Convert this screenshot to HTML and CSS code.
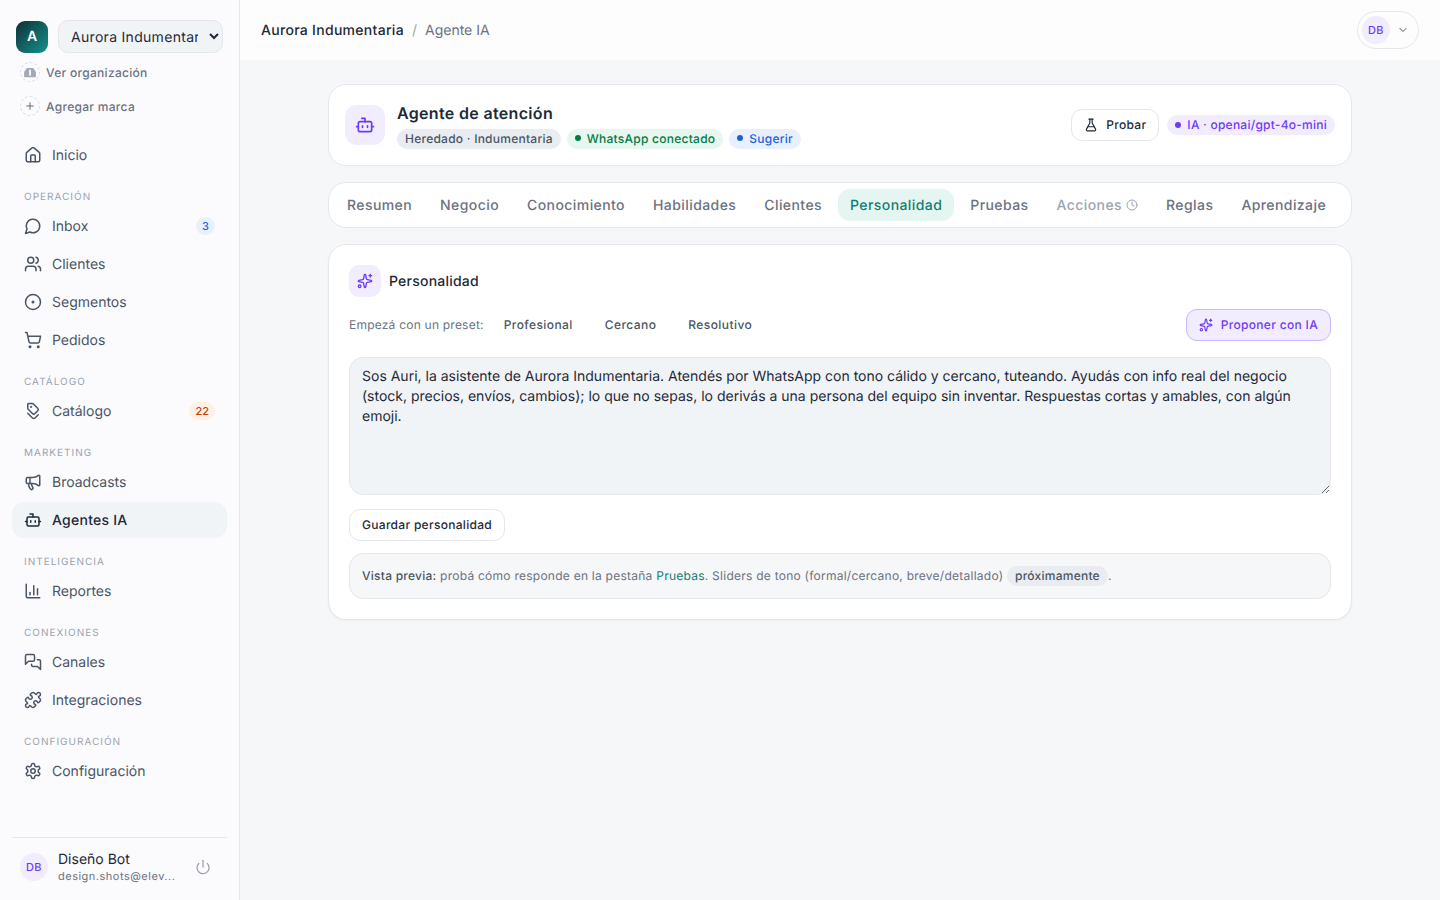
FILE: index.html
```html
<!DOCTYPE html>
<html lang="es">
<head>
    <meta charset="UTF-8">
    <meta name="viewport" content="width=device-width, initial-scale=1.0">
    <title>Agente IA</title>
    <link rel="stylesheet" href="styles.css">
</head>
<body>
    <div class="app">
        <aside class="sidebar">
            <div class="brandRow">
                <div class="brandLogo">A</div>
                <select class="brandSelect">
                    <option>Aurora Indumentaria</option>
                </select>
            </div>
            <a class="brandLink">
                <span class="brandLinkIcon">
                    <svg class="ico14 orgIcon" viewBox="0 0 24 24"><path d="M3 20v-8l4-6h10l4 6v8z"/><path class="orgDoor" d="M12 9v8"/></svg>
                </span>
                Ver organización
            </a>
            <a class="brandLink">
                <span class="brandLinkIcon">
                    <svg class="ico10 dark" viewBox="0 0 24 24"><path d="M4 12h16"/><path d="M12 4v16"/></svg>
                </span>
                Agregar marca
            </a>

            <nav class="nav">
                <a class="navItem">
                    <svg class="ico18" viewBox="0 0 24 24"><path d="M15 21v-8a1 1 0 0 0-1-1h-4a1 1 0 0 0-1 1v8"/><path d="M3 10a2 2 0 0 1 .709-1.528l7-5.999a2 2 0 0 1 2.582 0l7 5.999A2 2 0 0 1 21 10v9a2 2 0 0 1-2 2H5a2 2 0 0 1-2-2z"/></svg>
                    Inicio
                </a>

                <div class="navLabel">OPERACIÓN</div>
                <a class="navItem">
                    <svg class="ico18" viewBox="0 0 24 24"><path d="M7.9 20A9 9 0 1 0 4 16.1L2 22Z"/></svg>
                    Inbox
                    <span class="navBadge blue">3</span>
                </a>
                <a class="navItem">
                    <svg class="ico18" viewBox="0 0 24 24"><path d="M16 21v-2a4 4 0 0 0-4-4H6a4 4 0 0 0-4 4v2"/><circle cx="9" cy="7" r="4"/><path d="M22 21v-2a4 4 0 0 0-3-3.87"/><path d="M16 3.13a4 4 0 0 1 0 7.75"/></svg>
                    Clientes
                </a>
                <a class="navItem">
                    <svg class="ico18" viewBox="0 0 24 24"><circle cx="12" cy="12" r="10"/><circle cx="12" cy="12" r="1"/></svg>
                    Segmentos
                </a>
                <a class="navItem">
                    <svg class="ico18" viewBox="0 0 24 24"><circle cx="8" cy="21" r="1"/><circle cx="19" cy="21" r="1"/><path d="M2.05 2.05h2l2.66 12.42a2 2 0 0 0 2 1.58h9.78a2 2 0 0 0 1.95-1.57l1.65-7.43H5.12"/></svg>
                    Pedidos
                </a>

                <div class="navLabel">CATÁLOGO</div>
                <a class="navItem">
                    <svg class="ico18" viewBox="0 0 24 24"><g transform="matrix(0 1 1 0 0 0)"><path d="m15 5 6.3 6.3a2.4 2.4 0 0 1 0 3.4L17 19"/><path d="M9.586 5.586A2 2 0 0 0 8.172 5H3a1 1 0 0 0-1 1v5.172a2 2 0 0 0 .586 1.414L8.29 18.29a2.426 2.426 0 0 0 3.42 0l3.58-3.58a2.426 2.426 0 0 0 0-3.42z"/><circle cx="6.5" cy="9.5" r=".5" fill="currentColor"/></g></svg>
                    Catálogo
                    <span class="navBadge orange">22</span>
                </a>

                <div class="navLabel">MARKETING</div>
                <a class="navItem">
                    <svg class="ico18" viewBox="0 0 24 24"><path d="M11 6a13 13 0 0 0 8.4-2.8A1 1 0 0 1 21 4v12a1 1 0 0 1-1.6.8A13 13 0 0 0 11 14H5a2 2 0 0 1-2-2V8a2 2 0 0 1 2-2z"/><path d="M6 14a12 12 0 0 0 2.4 7.2 2 2 0 0 0 3.2-2.4A8 8 0 0 1 10 14"/><path d="M8 6v8"/></svg>
                    Broadcasts
                </a>
                <a class="navItem active">
                    <svg class="ico18" viewBox="0 0 24 24"><path d="M12 8V4H8"/><rect width="16" height="12" x="4" y="8" rx="2"/><path d="M2 14h2"/><path d="M20 14h2"/><path d="M15 13v2"/><path d="M9 13v2"/></svg>
                    Agentes IA
                </a>

                <div class="navLabel">INTELIGENCIA</div>
                <a class="navItem">
                    <svg class="ico18" viewBox="0 0 24 24"><path d="M3 3v16a2 2 0 0 0 2 2h16"/><path d="M18 17V9"/><path d="M13 17V5"/><path d="M8 17v-3"/></svg>
                    Reportes
                </a>

                <div class="navLabel">CONEXIONES</div>
                <a class="navItem">
                    <svg class="ico18" viewBox="0 0 24 24"><path d="M14 9a2 2 0 0 1-2 2H6l-4 4V4a2 2 0 0 1 2-2h8a2 2 0 0 1 2 2z"/><path d="M18 9h2a2 2 0 0 1 2 2v11l-4-4h-6a2 2 0 0 1-2-2v-1"/></svg>
                    Canales
                </a>
                <a class="navItem">
                    <svg class="ico18" viewBox="0 0 24 24"><path d="M15.39 4.39a1 1 0 0 0 1.68-.474 2.5 2.5 0 1 1 3.014 3.015 1 1 0 0 0-.474 1.68l1.683 1.682a2.414 2.414 0 0 1 0 3.414L19.61 15.39a1 1 0 0 1-1.68-.474 2.5 2.5 0 1 0-3.014 3.015 1 1 0 0 1 .474 1.68l-1.683 1.682a2.414 2.414 0 0 1-3.414 0L8.61 19.61a1 1 0 0 0-1.68.474 2.5 2.5 0 1 1-3.014-3.015 1 1 0 0 0 .474-1.68l-1.683-1.682a2.414 2.414 0 0 1 0-3.414L4.39 8.61a1 1 0 0 1 1.68.474 2.5 2.5 0 1 0 3.014-3.015 1 1 0 0 1-.474-1.68l1.683-1.682a2.414 2.414 0 0 1 3.414 0z"/></svg>
                    Integraciones
                </a>

                <div class="navLabel">CONFIGURACIÓN</div>
                <a class="navItem">
                    <svg class="ico18" viewBox="0 0 24 24"><path d="M12.22 2h-.44a2 2 0 0 0-2 2v.18a2 2 0 0 1-1 1.73l-.43.25a2 2 0 0 1-2 0l-.15-.08a2 2 0 0 0-2.73.73l-.22.38a2 2 0 0 0 .73 2.73l.15.1a2 2 0 0 1 1 1.72v.51a2 2 0 0 1-1 1.74l-.15.09a2 2 0 0 0-.73 2.73l.22.38a2 2 0 0 0 2.73.73l.15-.08a2 2 0 0 1 2 0l.43.25a2 2 0 0 1 1 1.73V20a2 2 0 0 0 2 2h.44a2 2 0 0 0 2-2v-.18a2 2 0 0 1 1-1.73l.43-.25a2 2 0 0 1 2 0l.15.08a2 2 0 0 0 2.73-.73l.22-.39a2 2 0 0 0-.73-2.73l-.15-.08a2 2 0 0 1-1-1.74v-.5a2 2 0 0 1 1-1.74l.15-.09a2 2 0 0 0 .73-2.73l-.22-.38a2 2 0 0 0-2.73-.73l-.15.08a2 2 0 0 1-2 0l-.43-.25a2 2 0 0 1-1-1.73V4a2 2 0 0 0-2-2z"/><circle cx="12" cy="12" r="3"/></svg>
                    Configuración
                </a>
            </nav>

            <div class="userRow">
                <div class="avatar">DB</div>
                <div class="userInfo">
                    <div class="userName">Diseño Bot</div>
                    <div class="userMail">design.shots@elev...</div>
                </div>
                <svg class="ico16 muted" viewBox="0 0 24 24"><path d="M12 2v10"/><path d="M18.4 6.6a9 9 0 1 1-12.77.04"/></svg>
            </div>
        </aside>

        <div class="main">
            <header class="topbar">
                <div class="crumbs">
                    <span class="crumbStrong">Aurora Indumentaria</span>
                    <span class="crumbSep">/</span>
                    <span>Agente IA</span>
                </div>
                <div class="userMenu">
                    <div class="avatar">DB</div>
                    <svg class="ico12" viewBox="0 0 24 24"><path d="m6 9 6 6 6-6"/></svg>
                </div>
            </header>

            <div class="content">
                <section class="agentCard">
                    <div class="agentIcon">
                        <svg class="ico20 violet" viewBox="0 0 24 24"><path d="M12 8V4H8"/><rect width="16" height="12" x="4" y="8" rx="2"/><path d="M2 14h2"/><path d="M20 14h2"/><path d="M15 13v2"/><path d="M9 13v2"/></svg>
                    </div>
                    <div class="agentInfo">
                        <h1 class="agentName">Agente de atención</h1>
                        <div class="pills">
                            <span class="pill gray">Heredado · Indumentaria</span>
                            <span class="pill green"><i class="dot"></i>WhatsApp conectado</span>
                            <span class="pill blue"><i class="dot"></i>Sugerir</span>
                        </div>
                    </div>
                    <div class="agentActions">
                        <button class="btn">
                            <svg class="ico14" viewBox="0 0 24 24"><path d="M14 2v6a2 2 0 0 0 .245.96l5.51 10.08A2 2 0 0 1 18 22H6a2 2 0 0 1-1.755-2.96l5.51-10.08A2 2 0 0 0 10 8V2"/><path d="M6.453 15h11.094"/><path d="M8.5 2h7"/></svg>
                            Probar
                        </button>
                        <span class="pill violetPill"><i class="dot"></i>IA · openai/gpt-4o-mini</span>
                    </div>
                </section>

                <nav class="tabs">
                    <a class="tab">Resumen</a>
                    <a class="tab">Negocio</a>
                    <a class="tab">Conocimiento</a>
                    <a class="tab">Habilidades</a>
                    <a class="tab">Clientes</a>
                    <a class="tab active">Personalidad</a>
                    <a class="tab">Pruebas</a>
                    <a class="tab disabled">Acciones
                        <svg class="ico12" viewBox="0 0 24 24"><circle cx="12" cy="12" r="10"/><path d="M12 6v6l4 2"/></svg>
                    </a>
                    <a class="tab">Reglas</a>
                    <a class="tab">Aprendizaje</a>
                </nav>

                <section class="panel">
                    <div class="panelHead">
                        <div class="panelIcon">
                            <svg class="ico16 violet" viewBox="0 0 24 24"><path d="M11.017 2.814a1 1 0 0 1 1.966 0l1.051 5.558a2 2 0 0 0 1.594 1.594l5.558 1.051a1 1 0 0 1 0 1.966l-5.558 1.051a2 2 0 0 0-1.594 1.594l-1.051 5.558a1 1 0 0 1-1.966 0l-1.051-5.558a2 2 0 0 0-1.594-1.594l-5.558-1.051a1 1 0 0 1 0-1.966l5.558-1.051a2 2 0 0 0 1.594-1.594z"/><path d="M20 2v4"/><path d="M22 4h-4"/><circle cx="4" cy="20" r="2"/></svg>
                        </div>
                        <h2 class="panelTitle">Personalidad</h2>
                    </div>

                    <div class="presetRow">
                        <span class="presetLabel">Empezá con un preset:</span>
                        <button class="preset">Profesional</button>
                        <button class="preset">Cercano</button>
                        <button class="preset">Resolutivo</button>
                        <button class="proposeBtn">
                            <svg class="ico14" viewBox="0 0 24 24"><path d="M11.017 2.814a1 1 0 0 1 1.966 0l1.051 5.558a2 2 0 0 0 1.594 1.594l5.558 1.051a1 1 0 0 1 0 1.966l-5.558 1.051a2 2 0 0 0-1.594 1.594l-1.051 5.558a1 1 0 0 1-1.966 0l-1.051-5.558a2 2 0 0 0-1.594-1.594l-5.558-1.051a1 1 0 0 1 0-1.966l5.558-1.051a2 2 0 0 0 1.594-1.594z"/><path d="M20 2v4"/><path d="M22 4h-4"/><circle cx="4" cy="20" r="2"/></svg>
                            Proponer con IA
                        </button>
                    </div>

                    <textarea class="promptBox">Sos Auri, la asistente de Aurora Indumentaria. Atendés por WhatsApp con tono cálido y cercano, tuteando. Ayudás con info real del negocio (stock, precios, envíos, cambios); lo que no sepas, lo derivás a una persona del equipo sin inventar. Respuestas cortas y amables, con algún emoji.</textarea>

                    <div class="saveRow">
                        <button class="btn">Guardar personalidad</button>
                    </div>

                    <div class="previewNote">
                        <strong>Vista previa:</strong> probá cómo responde en la pestaña <a class="noteLink">Pruebas</a>. Sliders de tono (formal/cercano, breve/detallado) <span class="soonPill">próximamente</span>.
                    </div>
                </section>
            </div>
        </div>
    </div>
</body>
</html>
```

FILE: styles.css
```css
*{
    box-sizing: border-box;
}
html, body{
    margin: 0;
    height: 100%;
}
body{
    font-family: Inter, "Liberation Sans", sans-serif;
    text-rendering: geometricPrecision;
    color: #1f2937;
    background-color: #f6f7f9;
    overflow: hidden;
}
button, select{
    text-rendering: inherit;
}
svg{
    fill: none;
    stroke: currentColor;
    stroke-width: 2;
    stroke-linecap: round;
    stroke-linejoin: round;
    flex-shrink: 0;
}
.ico10{ width: 10px; height: 10px; }
.ico12{ width: 12px; height: 12px; }
.ico14{ width: 14px; height: 14px; }
.ico16{ width: 16px; height: 16px; }
.ico18{ width: 18px; height: 18px; }
.ico20{ width: 20px; height: 20px; }
.violet{ color: #6d3bf5; }
.muted{ color: #9ca3af; }
.dark{ color: #4b5563; }
.orgIcon{
    color: #a3a9b5;
    fill: #a3a9b5;
}
.orgDoor{
    stroke: #fbfbfe;
    stroke-width: 3;
}

.app{
    display: flex;
    height: 900px;
}

/* sidebar */
.sidebar{
    width: 240px;
    flex-shrink: 0;
    display: flex;
    flex-direction: column;
    padding: 20px 12px 0;
    background-color: #fbfbfe;
    border-right: 1px solid #e5e7eb;
}
.brandRow{
    display: flex;
    align-items: center;
    gap: 10px;
    padding-left: 4px;
    height: 33px;
}
.brandLogo{
    width: 32px;
    height: 32px;
    display: flex;
    align-items: center;
    justify-content: center;
    border-radius: 9px;
    background: linear-gradient(135deg, #0f2f36, #14948a);
    color: #fff;
    font-size: 14px;
    font-weight: 600;
}
.brandSelect{
    width: 165px;
    height: 33px;
    padding: 1px 8px 0;
    border: 1px solid #e5e7eb;
    border-radius: 10px;
    background-color: #f1f4f7;
    color: #1f2937;
    font-family: inherit;
    font-size: 14px;
    letter-spacing: 0.3px;
}
.brandLink{
    display: flex;
    align-items: center;
    gap: 6px;
    height: 34px;
    padding-left: 8px;
    font-size: 12px;
    font-weight: 500;
    letter-spacing: 0.3px;
    color: #6b7280;
}
.brandRow + .brandLink{
    margin-top: 2px;
}
.brandLinkIcon{
    width: 20px;
    height: 20px;
    display: flex;
    align-items: center;
    justify-content: center;
    border: 1px dashed #d8dbe1;
    border-radius: 50%;
}
.nav{
    display: flex;
    flex-direction: column;
    margin-top: 14px;
}
.navItem{
    display: flex;
    align-items: center;
    gap: 10px;
    height: 36px;
    margin-bottom: 2px;
    padding: 0 12px;
    border-radius: 12px;
    font-size: 14px;
    color: #4b5563;
}
.navItem.active{
    background-color: #f1f4f7;
    color: #1f2937;
    font-weight: 500;
    letter-spacing: 0.25px;
}
.navLabel{
    margin: 14px 0 0;
    padding: 0 12px;
    height: 19px;
    font-size: 10px;
    font-weight: 400;
    letter-spacing: 1px;
    line-height: 17px;
    color: #9ca3af;
}
.navBadge{
    margin-left: auto;
    height: 18px;
    min-width: 19px;
    padding: 0 6px;
    display: flex;
    align-items: center;
    justify-content: center;
    border-radius: 9px;
    font-size: 11px;
    font-weight: 500;
}
.navBadge.blue{
    background-color: #e9f0fd;
    color: #1d5fdb;
}
.navBadge.orange{
    background-color: #fdf0e5;
    color: #c2410c;
}
.userRow{
    margin-top: auto;
    height: 63px;
    display: flex;
    align-items: center;
    padding: 0 16px 5px 8px;
    border-top: 1px solid #e5e7eb;
}
.avatar{
    width: 28px;
    height: 28px;
    display: flex;
    align-items: center;
    justify-content: center;
    border-radius: 50%;
    background-color: #f1ecfe;
    color: #6d3bf5;
    font-size: 11px;
    font-weight: 500;
    letter-spacing: 0.3px;
    flex-shrink: 0;
}
.userInfo{
    margin-left: 10px;
    flex-grow: 1;
    min-width: 0;
}
.userName{
    font-size: 14px;
    line-height: 18px;
    color: #1f2937;
}
.userMail{
    font-size: 11px;
    line-height: 14px;
    letter-spacing: 0.5px;
    color: #6b7280;
    white-space: nowrap;
}

/* main area */
.main{
    flex-grow: 1;
    min-width: 0;
}
.topbar{
    height: 60px;
    display: flex;
    align-items: center;
    justify-content: space-between;
    padding: 0 21px;
    background-color: #fdfdfe;
}
.crumbs{
    display: flex;
    align-items: center;
    gap: 8px;
    font-size: 14px;
    color: #6b7280;
}
.crumbStrong{
    color: #1f2937;
    font-weight: 500;
    letter-spacing: 0.3px;
}
.crumbSep{
    color: #9ca3af;
}
.userMenu{
    width: 62px;
    height: 38px;
    display: flex;
    align-items: center;
    gap: 7px;
    padding: 0 4px;
    border: 1px solid #e5e7eb;
    border-radius: 19px;
    color: #4b5563;
}
.content{
    width: 1024px;
    margin: 0 auto;
    padding-top: 24px;
    display: flex;
    flex-direction: column;
    gap: 16px;
}

.agentCard{
    height: 82px;
    display: flex;
    align-items: center;
    padding: 0 16px;
    background-color: #fff;
    border: 1px solid #e5e7eb;
    border-radius: 18px;
}
.agentIcon{
    width: 40px;
    height: 40px;
    display: flex;
    align-items: center;
    justify-content: center;
    border-radius: 12px;
    background-color: #f1ecfe;
}
.agentInfo{
    margin-left: 12px;
}
.agentName{
    margin: 0 0 5px;
    font-size: 16px;
    line-height: 22px;
    font-weight: 600;
    letter-spacing: 0.33px;
    color: #1f2937;
}
.pills{
    display: flex;
    gap: 6px;
}
.pill{
    display: inline-flex;
    align-items: center;
    gap: 6px;
    height: 20px;
    padding: 0 8px 1px;
    border-radius: 10px;
    font-size: 12px;
    font-weight: 500;
    letter-spacing: 0.25px;
    white-space: nowrap;
}
.dot{
    width: 6px;
    height: 6px;
    border-radius: 50%;
    background-color: currentColor;
}
.pill.gray{
    background-color: #e9ecf1;
    color: #4b5563;
}
.pill.green{
    background-color: #e7f6ee;
    color: #047a46;
}
.pill.blue{
    background-color: #e9f0fd;
    color: #1d5fdb;
}
.pill.violetPill{
    background-color: #f1ecfe;
    color: #6d3bf5;
}
.agentActions{
    margin-left: auto;
    display: flex;
    align-items: center;
    gap: 8px;
}
.btn{
    height: 32px;
    display: inline-flex;
    align-items: center;
    gap: 8px;
    padding: 0 12px 1px;
    background-color: #fff;
    border: 1px solid #e5e7eb;
    border-radius: 11px;
    font-family: inherit;
    font-size: 12px;
    font-weight: 500;
    letter-spacing: 0.3px;
    color: #1f2937;
}

.tabs{
    height: 46px;
    display: flex;
    align-items: center;
    gap: 4px;
    padding: 0 6px;
    background-color: #fff;
    border: 1px solid #e5e7eb;
    border-radius: 18px;
}
.tab{
    height: 32px;
    display: flex;
    align-items: center;
    gap: 4px;
    padding: 0 12px;
    border-radius: 12px;
    font-size: 14px;
    font-weight: 500;
    letter-spacing: 0.42px;
    color: #6b7280;
}
.tab.active{
    background-color: #e5f5f2;
    color: #0f7f72;
}
.tab.disabled{
    color: #9ca3af;
}

.panel{
    height: 376px;
    padding: 20px;
    background-color: #fff;
    border: 1px solid #e5e7eb;
    border-radius: 18px;
    box-shadow: 0 1px 2px rgba(0, 0, 0, 0.05);
}
.panelHead{
    display: flex;
    align-items: center;
    gap: 8px;
}
.panelIcon{
    width: 32px;
    height: 32px;
    display: flex;
    align-items: center;
    justify-content: center;
    border-radius: 10px;
    background-color: #f1ecfe;
}
.panelTitle{
    margin: 0;
    font-size: 14px;
    font-weight: 500;
    letter-spacing: 0.22px;
    color: #1f2937;
}
.presetRow{
    display: flex;
    align-items: center;
    margin-top: 12px;
    height: 32px;
}
.presetLabel{
    padding-bottom: 1px;
    font-size: 12px;
    letter-spacing: 0.22px;
    color: #6b7280;
    margin-right: 8px;
}
.preset{
    height: 32px;
    padding: 0 12px 1px;
    border: 0;
    background: none;
    font-family: inherit;
    font-size: 12px;
    font-weight: 500;
    letter-spacing: 0.42px;
    color: #4b5563;
    margin-right: 8px;
}
.proposeBtn{
    margin-left: auto;
    height: 32px;
    display: flex;
    align-items: center;
    gap: 8px;
    padding: 0 12px 1px;
    background-color: #f1ecfe;
    border: 1px solid #c9b8fb;
    border-radius: 11px;
    font-family: inherit;
    font-size: 12px;
    font-weight: 500;
    letter-spacing: 0.32px;
    color: #6d3bf5;
}
.promptBox{
    display: block;
    width: 100%;
    height: 138px;
    margin-top: 16px;
    padding: 9px 12px 8px;
    background-color: #f1f4f7;
    border: 1px solid #e5e7eb;
    border-radius: 14px;
    font-family: inherit;
    font-size: 14px;
    line-height: 20px;
    text-rendering: geometricPrecision;
    color: #1f2937;
    outline: none;
}
.saveRow{
    margin-top: 14px;
}
.previewNote{
    margin-top: 12px;
    height: 46px;
    display: block;
    padding: 0 12px;
    line-height: 44px;
    background-color: #f6f7f9;
    border: 1px solid #e5e7eb;
    border-radius: 14px;
    font-size: 12px;
    letter-spacing: 0.25px;
    color: #6b7280;
    white-space: nowrap;
}
.previewNote strong{
    font-weight: 500;
    color: #4b5563;
}
.noteLink{
    color: #0f7f72;
}
.soonPill{
    display: inline-block;
    height: 20px;
    line-height: 20px;
    padding: 0 8px;
    border-radius: 10px;
    background-color: #e9ecf1;
    color: #4b5563;
    font-weight: 500;
}
```
